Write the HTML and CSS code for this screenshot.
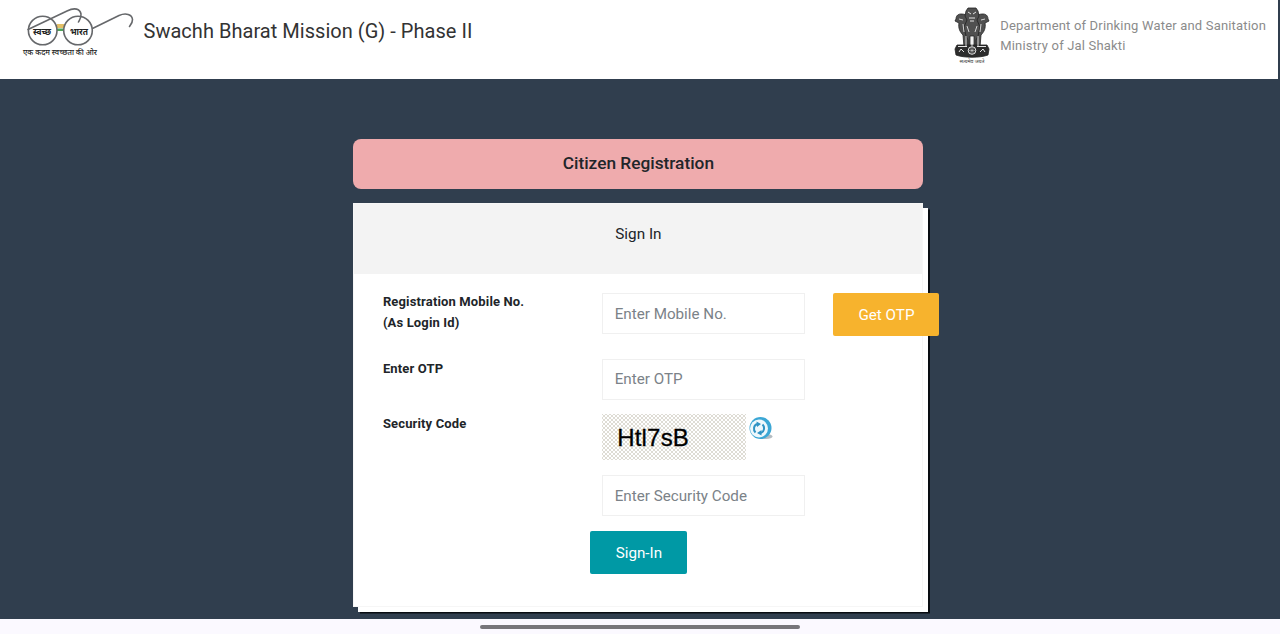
FILE: index.html
```html
<!DOCTYPE html>
<html lang="en">
<head>
  <meta charset="UTF-8">
  <meta name="viewport" content="width=device-width, initial-scale=1.0">
  <title>Swachh Bharat Mission (G) - Phase II</title>
  <link rel="stylesheet" href="styles.css">
</head>
<body>
  <header class="header">
    <svg class="logo" width="116" height="56" viewBox="20 4 116 56" fill="none">
      <rect x="57" y="24" width="7" height="4" fill="#e3c067"/>
      <rect x="57" y="28.500" width="7" height="2.500" fill="#4fa35a"/>
      <g stroke="#66686b" stroke-width="1.6" stroke-linecap="round">
        <circle cx="42.7" cy="30.5" r="14.3"/>
        <circle cx="78" cy="30.5" r="14.3"/>
        <path d="M28 29.500L67 11c8-4 13-2 14 3 .5 3-1 5-2.500 8"/>
        <path d="M92.500 28.500L119 15.500c7-3 13-1 13.500 4 .2 3-1.500 5-3 7"/>
      </g>
      <g fill="#222" font-weight="700" text-anchor="middle">
        <text x="42" y="35" font-size="9" textLength="18" lengthAdjust="spacingAndGlyphs">स्वच्छ</text>
        <text x="79" y="35" font-size="9" textLength="18" lengthAdjust="spacingAndGlyphs">भारत</text>
        <text x="60" y="54.500" font-size="7.500" font-weight="500" textLength="74" lengthAdjust="spacingAndGlyphs">एक कदम स्वच्छता की ओर</text>
      </g>
    </svg>
    <h1 class="title">Swachh Bharat Mission (G) - Phase II</h1>
    <div class="department">
      <svg class="emblem" width="36" height="58" viewBox="0 0 36 58">
        <g fill="#505050" stroke="#222" stroke-width=".8">
          <path d="M7 7c-4 0-5 3-5 5l-1 2 4 2c-1 5 1 9 4 12l1 12h5V12c-1-4-4-5-8-5z"/>
          <path d="M29 7c4 0 5 3 5 5l1 2-4 2c1 5-1 9-4 12l-1 12h-5V12c1-4 4-5 8-5z"/>
          <path d="M12 4l2-3h8l2 3 1 5-2 4 3 7-2 9-2 4v7h-2V29h-4v11h-2v-7l-2-4-2-9 3-7-2-4z"/>
          <path d="M3 38h30l2 4-1 6c-8 3-24 3-32 0l-1-6z" fill="#2c2c2c"/>
        </g>
        <g stroke="#e3e3e3" fill="none">
          <path d="M14 5l3 2M22 5l-3 2M15 11h6M16 14h4"/>
          <path d="M5 12l4 1M31 12l-4 1M9 17l1 8M27 17l-1 8M13 19l2 6M23 19l-2 6M12 29v10M24 29v10M18 30v9" stroke-width=".9"/>
          <circle cx="18" cy="43.500" r="3.800"/>
          <path d="M18 40v7M14.500 43.500h7M15.500 41l5 5M20.500 41l-5 5" stroke-width=".5"/>
          <path d="M5 45l2-3 3 3M26 45l3-3 2 3M4 39.500h9M23 39.500h9"/>
        </g>
        <text x="18" y="55.500" font-size="5" text-anchor="middle" textLength="25" lengthAdjust="spacingAndGlyphs" fill="#333">सत्यमेव जयते</text>
      </svg>
      <p>Department of Drinking Water and Sanitation<br>Ministry of Jal Shakti</p>
    </div>
  </header>

  <main class="content">
    <h2 class="banner">Citizen Registration</h2>
    <form class="card" onsubmit="return false">
      <div class="card-header">Sign In</div>
      <div class="card-body">
        <div class="row row-mobile">
          <label for="mobile">Registration Mobile No.<br>(As Login Id)</label>
          <input id="mobile" type="text" placeholder="Enter Mobile No.">
          <button class="btn btn-otp" type="button">Get OTP</button>
        </div>
        <div class="row row-otp">
          <label for="otp">Enter OTP</label>
          <input id="otp" type="text" placeholder="Enter OTP">
        </div>
        <div class="row">
          <label for="code">Security Code</label>
          <div class="security">
            <div class="captcha-line">
              <div class="captcha">Htl7sB</div>
              <svg class="refresh" width="26" height="26" viewBox="0 0 26 26">
                <ellipse cx="18" cy="20.500" rx="6.500" ry="2.500" fill="#b5bdc2"/>
                <circle cx="12.500" cy="12" r="11" fill="#3ba7d5"/>
                <circle cx="11" cy="12.500" r="9" fill="#eef8fc"/>
                <g fill="none" stroke="#2f93c4" stroke-width="2">
                  <path d="M9.500 8c-4 1-4.500 6-2 8.500"/>
                  <path d="M12.500 17c4-1 4.500-6 2-8.500"/>
                </g>
                <path d="M8.500 5.500l4.500 2.500-4 3zM13.500 14l-4.500 3 4.500 2.500z" fill="#2f93c4"/>
              </svg>
            </div>
            <input id="code" type="text" placeholder="Enter Security Code">
          </div>
        </div>
        <button class="btn btn-signin" type="submit">Sign-In</button>
      </div>
    </form>
  </main>

  <footer class="nav-bar"><span></span></footer>
</body>
</html>
```
FILE: styles.css
```css
* {
  box-sizing: border-box;
}
body {
  margin: 0;
  height: 634px;
  display: flex;
  flex-direction: column;
  overflow: hidden;
  background-color: #303e4e;
  font-family: Roboto, "Noto Sans", sans-serif;
  color: #212529;
}
.header {
  display: flex;
  align-items: flex-start;
  width: 1278px;
  height: 79.4px;
  padding: 4px 12px 0 20px;
  background-color: #fff;
}
.title {
  margin: 14px 0 0 7.5px;
  font-size: 20px;
  line-height: 26px;
  font-weight: 400;
  letter-spacing: 0.03px;
  color: #333;
}
.department {
  display: flex;
  gap: 10px;
  margin: 3px 0 0 auto;
}
.department p {
  margin: 8.5px 0 0;
  font-size: 13px;
  line-height: 20.5px;
  letter-spacing: 0.18px;
  color: #8b8b8b;
  white-space: nowrap;
}
.content {
  flex: 1;
  width: 570px;
  margin-left: 353.4px;
  padding-top: 60px;
}
.banner {
  margin: 0 0 14px;
  height: 50px;
  border-radius: 8px;
  background-color: #efabad;
  font-size: 17.3px;
  line-height: 48px;
  font-weight: 500;
  text-align: center;
}
.card {
  height: 404px;
  background-color: #fff;
  border: 1px solid #f6f6f6;
  box-shadow: 5px 5px 0 #fff, 7px 6.5px 0 #080c11;
}
.card-header {
  height: 70px;
  background-color: #f3f3f3;
  font-size: 15.3px;
  line-height: 61px;
  text-align: center;
}
.card-body {
  padding: 19px 0 0 28.5px;
}
.row {
  display: grid;
  grid-template-columns: 190px 203px 106px;
  column-gap: 28.8px;
  align-items: start;
}
.row-mobile {
  height: 65.5px;
}
.row-otp {
  height: 55.5px;
}
label {
  font-size: 13px;
  line-height: 20.5px;
  font-weight: 700;
  letter-spacing: 0.15px;
  white-space: nowrap;
}
.row-mobile label {
  margin-top: -1px;
}
input {
  display: block;
  width: 203px;
  height: 41px;
  padding: 0 12px;
  border: 1px solid #f0f0f0;
  background-color: #fff;
  font: 400 15.2px Roboto, sans-serif;
}
input::placeholder {
  color: #7b8288;
}
.btn {
  height: 43px;
  padding: 0;
  border: none;
  border-radius: 2px;
  color: #fff;
  font: 400 15.2px Roboto, sans-serif;
}
.btn-otp {
  width: 106px;
  background-color: #f7b32d;
}
.btn-signin {
  display: block;
  width: 97px;
  margin: 15px 0 0 207.5px;
  background-color: #0099a5;
}
.captcha-line {
  display: flex;
  gap: 2px;
}
.captcha {
  width: 144px;
  height: 46px;
  margin-bottom: 15px;
  padding-left: 15.5px;
  background-color: #fff;
  background-image: radial-gradient(circle, #dddbd3 0.7px, transparent 1.1px), radial-gradient(circle, #dddbd3 0.7px, transparent 1.1px);
  background-size: 4px 4px;
  background-position: 0 0, 2px 2px;
  font: 400 24px/48px "Liberation Sans", sans-serif;
  letter-spacing: 0.2px;
  -webkit-text-stroke: 0.3px #000;
  color: #000;
}
.refresh {
  margin-top: 1.5px;
}
.nav-bar {
  display: flex;
  justify-content: center;
  height: 15px;
  padding-top: 6px;
  background-color: #fbf9ff;
}
.nav-bar span {
  width: 320px;
  height: 4px;
  border-radius: 2px;
  background-color: #77767a;
}
```
